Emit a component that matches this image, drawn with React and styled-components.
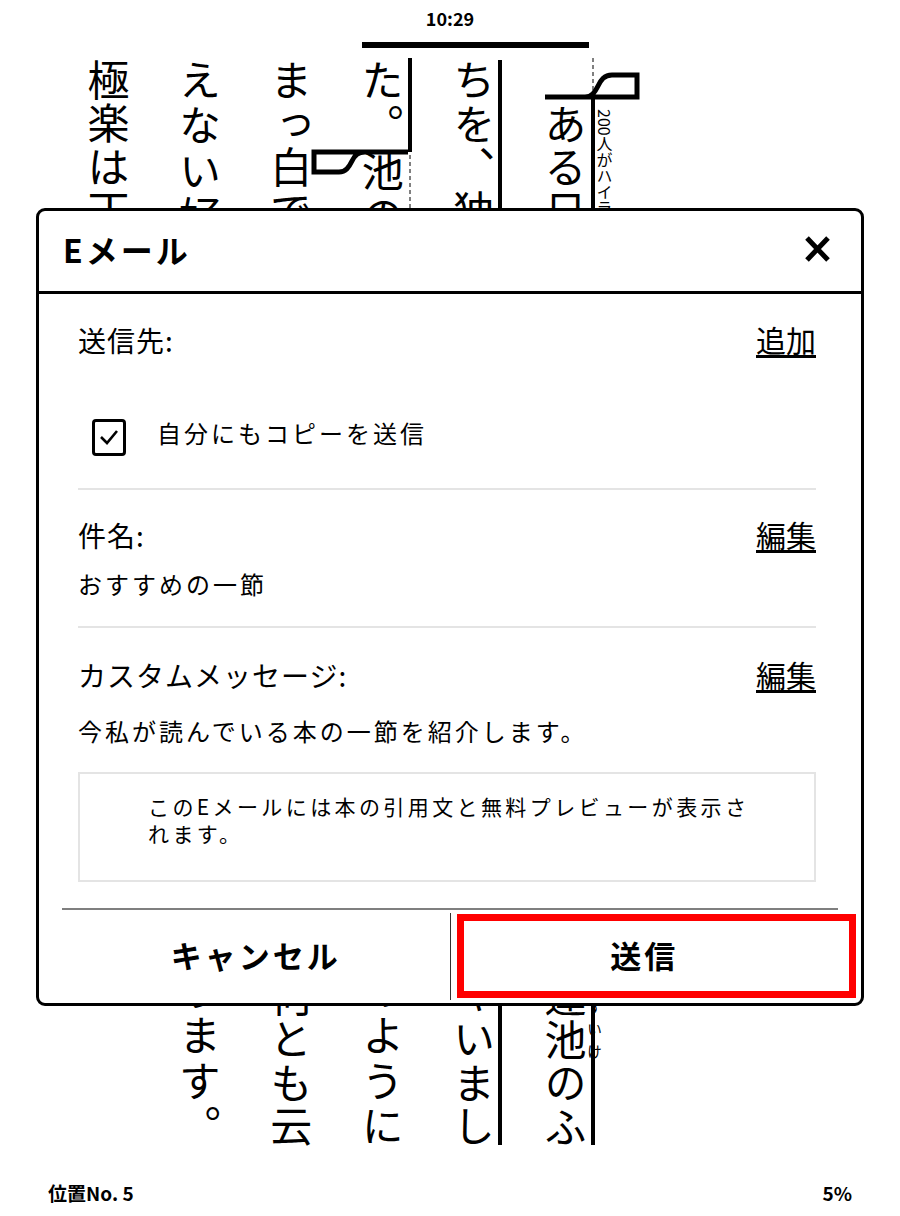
import React from "react";
import styled, { createGlobalStyle } from "styled-components";

const GlobalStyle = createGlobalStyle`
  html, body {
    margin: 0;
    padding: 0;
    background: #fff;
  }
  body {
    font-family: "Noto Sans CJK JP", "Noto Sans", sans-serif;
    color: #000;
  }
`;

const Page = styled.div`
  position: relative;
  width: 900px;
  height: 1216px;
  overflow: hidden;
  display: flex;
  flex-direction: column;
  background: #fff;
`;

const StatusBar = styled.header`
  height: 36px;
  display: flex;
  align-items: center;
  justify-content: center;
  font-size: 18px;
  font-weight: 700;
`;

const Book = styled.main`
  flex: 1;
  display: flex;
  flex-direction: row-reverse;
  padding: 23px 289px 0 0;
`;

const Column = styled.p`
  position: relative;
  margin: 0;
  flex: none;
  width: 91.4px;
  height: 1090px;
  writing-mode: vertical-rl;
  font-family: "Noto Sans CJK JP", sans-serif;
  font-size: 42px;
  line-height: 91.4px;
  letter-spacing: 1.5px;
  text-align: justify;
  text-align-last: ${(p) => (p.$last ? "start" : "justify")};

  rt {
    font-size: 15px;
    letter-spacing: 0;
  }
`;

const HighlightNote = styled.span`
  position: absolute;
  top: 50px;
  left: 77px;
  font-size: 16px;
  line-height: 16px;
  letter-spacing: 0;
  white-space: nowrap;
`;

const SelectionLayer = styled.svg`
  position: absolute;
  top: 0;
  left: 0;
  width: 900px;
  height: 1216px;
  pointer-events: none;
`;

const PageFooter = styled.footer`
  height: 48px;
  display: flex;
  align-items: center;
  justify-content: space-between;
  padding: 0 48px;
  font-size: 19px;
  font-weight: 700;
`;

const Dialog = styled.section`
  position: absolute;
  top: 208px;
  left: 36px;
  width: 828px;
  box-sizing: border-box;
  border: 3px solid #000;
  border-radius: 9px;
  background: #fff;
  display: flex;
  flex-direction: column;
`;

const DialogHeader = styled.div`
  height: 83px;
  display: flex;
  align-items: center;
  justify-content: space-between;
  padding: 0 30px 4px 24px;
  box-sizing: border-box;
  border-bottom: 3px solid #000;
`;

const Title = styled.h2`
  margin: 0;
  font-size: 32px;
  font-weight: 700;
  letter-spacing: 3px;
`;

const CloseButton = styled.button`
  border: 0;
  background: none;
  padding: 0;
  width: 27px;
  height: 26px;
  display: flex;
`;

const Body = styled.div`
  padding: 0 45px 0 39px;
`;

const Section = styled.div`
  padding: ${(p) => p.$pad};
  border-bottom: ${(p) => (p.$divider ? "2px solid #e4e4e4" : "none")};
`;

const FieldRow = styled.div`
  display: flex;
  justify-content: space-between;
  align-items: center;
  height: 38px;
`;

const Label = styled.span`
  font-size: 28px;
  letter-spacing: 1px;
  line-height: 38px;
`;

const ActionLink = styled.a`
  font-size: 30px;
  line-height: 32px;
  color: #000;
  text-decoration: none;
  border-bottom: 3px solid #000;
`;

const CheckRow = styled.label`
  display: flex;
  align-items: center;
  gap: 31px;
  height: 40px;
  margin: 58px 0 0 14px;
  font-size: 24px;
  letter-spacing: 3px;
`;

const CheckBox = styled.span`
  width: 34px;
  height: 37px;
  box-sizing: border-box;
  border: 3px solid #000;
  border-radius: 4px;
  display: flex;
  align-items: center;
  justify-content: center;
`;

const CheckText = styled.span`
  padding-bottom: 10px;
`;

const Value = styled.p`
  margin: ${(p) => p.$mt} 0 0;
  font-size: 24px;
  letter-spacing: 3px;
  line-height: 38px;
`;

const Notice = styled.div`
  margin-top: 22px;
  height: 110px;
  box-sizing: border-box;
  border: 2px solid #e4e4e4;
  padding: 19px 56px 0 68px;
  font-size: 21px;
  letter-spacing: 3.4px;
  line-height: 27px;
`;

const ButtonBar = styled.div`
  display: flex;
  height: 93px;
  margin: 0 23px;
  border-top: 2px solid #7f7f7f;
`;

const ActionButton = styled.button`
  position: relative;
  flex: 1;
  border: 0;
  padding: 0 0 4px;
  background: #fff;
  color: #000;
  font-family: "Noto Sans CJK JP", sans-serif;
  font-size: 31px;
  font-weight: 700;
  letter-spacing: 3px;

  &::after {
    content: "";
    display: ${(p) => (p.$marked ? "block" : "none")};
    position: absolute;
    top: 4px;
    left: 6px;
    right: -18px;
    bottom: 5px;
    border: 7px solid #ff0000;
  }
`;

const ButtonDivider = styled.span`
  width: 1px;
  margin: 3px 0;
  background: #333;
`;

export default function App() {
  return (
    <>
      <GlobalStyle />
      <Page>
        <StatusBar>10:29</StatusBar>
        <Book>
          <Column>
            {"\u3000"}ある日の事でございます。<ruby>御釈迦様<rt>おしゃかさま</rt></ruby>は<ruby>極楽<rt>ごくらく</rt></ruby>の<ruby>蓮池<rt>はすいけ</rt></ruby>のふ
            <HighlightNote>200人がハイライト</HighlightNote>
          </Column>
          <Column>ちを、独りでぶらぶら御歩きになっていらっしゃいまし</Column>
          <Column>た。池の中に咲いている蓮の花は、みんな玉のように</Column>
          <Column>まっ白で、そのまん中にある金色の蕊からは、何とも云</Column>
          <Column>
            えない<ruby>好<rt>よ</rt></ruby>い匂が、絶間なくあたりへ溢れて居ります。
          </Column>
          <Column $last>極楽は丁度朝なのでございましょう。</Column>
        </Book>
        <PageFooter>
          <span>位置No. 5</span>
          <span>5%</span>
        </PageFooter>

        <SelectionLayer viewBox="0 0 900 1216" stroke="#000" fill="none">
          <line x1="362" y1="45" x2="589" y2="45" strokeWidth="6" />
          <line x1="500" y1="60" x2="500" y2="1145" strokeWidth="4" />
          <line x1="593" y1="97" x2="593" y2="1145" strokeWidth="4" />
          <line x1="410" y1="58" x2="410" y2="152" strokeWidth="4" />
          <line x1="593" y1="58" x2="593" y2="95" strokeWidth="1" strokeDasharray="4 3" />
          <line x1="410" y1="155" x2="410" y2="210" strokeWidth="1" strokeDasharray="4 3" />
          <path d="M545 97 H637 V75 H612 C604 75 601 80 598 86 C595 92 592 97 585 97" strokeWidth="5" />
          <path d="M408 152 H314 V172 H339 C346 172 349 167 352 161 C355 155 358 152 365 152" strokeWidth="5" />
        </SelectionLayer>

        <Dialog>
          <DialogHeader>
            <Title>Eメール</Title>
            <CloseButton aria-label="閉じる">
              <svg width="27" height="26" viewBox="0 0 27 26">
                <path d="M3 2 L24 24 M24 2 L3 24" stroke="#000" strokeWidth="5" />
              </svg>
            </CloseButton>
          </DialogHeader>
          <Body>
            <Section $pad="27px 0 31px" $divider>
              <FieldRow>
                <Label>送信先:</Label>
                <ActionLink>追加</ActionLink>
              </FieldRow>
              <CheckRow>
                <CheckBox>
                  <svg width="22" height="18" viewBox="0 0 22 18">
                    <path d="M3 9 L9 15 L19 3" stroke="#000" strokeWidth="2.6" fill="none" />
                  </svg>
                </CheckBox>
                <CheckText>自分にもコピーを送信</CheckText>
              </CheckRow>
            </Section>
            <Section $pad="26px 0 23px" $divider>
              <FieldRow>
                <Label>件名:</Label>
                <ActionLink>編集</ActionLink>
              </FieldRow>
              <Value $mt="11px">おすすめの一節</Value>
            </Section>
            <Section $pad="28px 0 26px">
              <FieldRow>
                <Label>カスタムメッセージ:</Label>
                <ActionLink>編集</ActionLink>
              </FieldRow>
              <Value $mt="18px">今私が読んでいる本の一節を紹介します。</Value>
              <Notice>このEメールには本の引用文と無料プレビューが表示されます。</Notice>
            </Section>
          </Body>
          <ButtonBar>
            <ActionButton>キャンセル</ActionButton>
            <ButtonDivider />
            <ActionButton $marked>送信</ActionButton>
          </ButtonBar>
        </Dialog>
      </Page>
    </>
  );
}
